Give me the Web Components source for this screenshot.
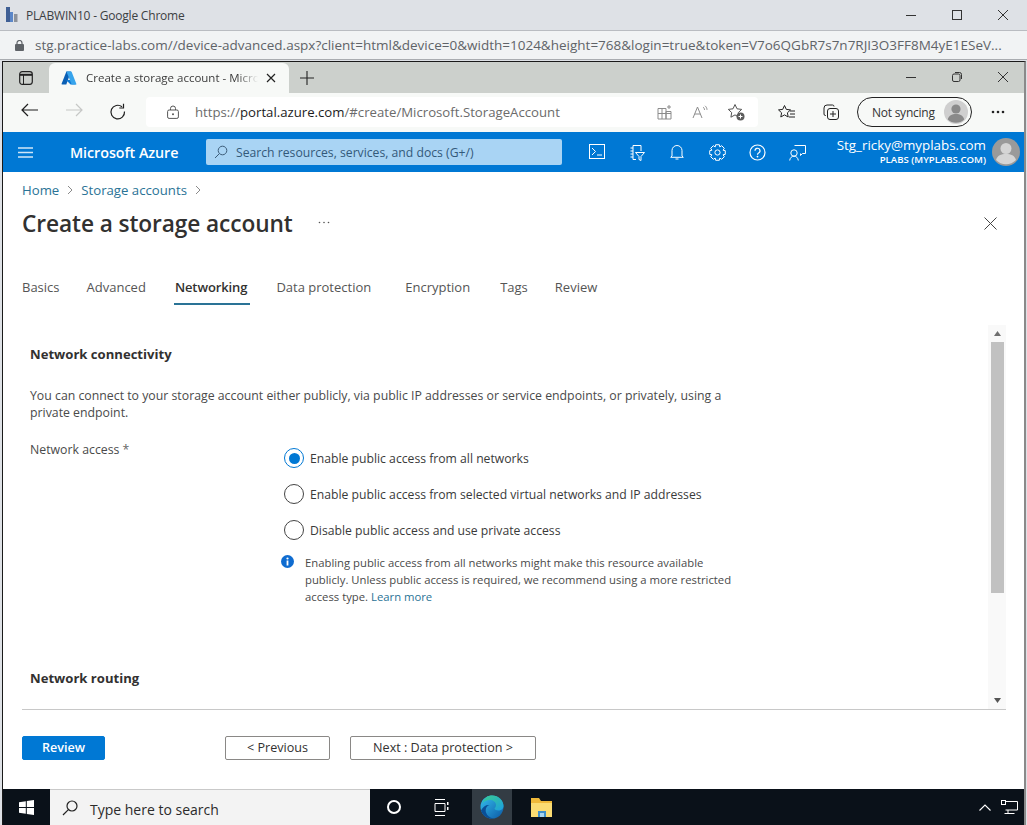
<!DOCTYPE html>
<html lang="en">
<head>
<meta charset="utf-8">
<title>Create a storage account</title>
<style>
html, body { margin: 0; padding: 0; height: 100%; overflow: hidden; background: #fff; }
body { font-family: "Open Sans", "Liberation Sans", sans-serif; }
</style>
</head>
<body>
<host-window>
  <edge-window>
    <azure-header></azure-header>
    <storage-blade></storage-blade>
  </edge-window>
  <win-taskbar></win-taskbar>
</host-window>

<script>
// every element here is just markup + styles, so one small helper is enough
function el(name, html) {
    customElements.define(name, class extends HTMLElement {
        constructor() {
            super();
            this.attachShadow({ mode: 'open' });
            this.shadowRoot.innerHTML = html;
        }
    });
}

const svg = (w, h, body, extra = '') =>
    `<svg width="${w}" height="${h}" viewBox="0 0 ${w} ${h}" fill="none" ${extra}>${body}</svg>`;

// outline of a cog with n teeth
function cogPath(cx, cy, outer, inner, n) {
    const pts = [];
    for (let i = 0; i < n; i++) {
        const a = (i / n) * Math.PI * 2;
        const step = Math.PI * 2 / n;
        [[inner, -.5], [outer, -.3], [outer, .3], [inner, .5]].forEach(([r, k]) => {
            const t = a + k * step;
            pts.push((cx + r * Math.cos(t)).toFixed(2) + ' ' + (cy + r * Math.sin(t)).toFixed(2));
        });
    }
    return 'M' + pts.join('L') + 'Z';
}

const azureLogo = svg(16, 14, `
    <path d="M5.4 .4H10L5.3 13.6H1.1a.6.6 0 0 1-.5-.8Z" fill="#0a5fb4"/>
    <path d="M12 9H5l4.6 4.6h5.2Z" fill="#0f7ad6"/>
    <path d="M5.4 .4h4.5a.7.7 0 0 1 .7.4L15.4 13a.5.5 0 0 1-.5.6h-4.2Z" fill="#37a4ec"/>`);

el('host-window', `
<style>
:host { display: flex; flex-direction: column; width: 1027px; height: 825px; background: #dee1e6; overflow: hidden; }
.title { height: 31px; flex: none; display: flex; align-items: center; border-bottom: 1px solid #b9bcc1; box-sizing: border-box; padding-left: 6px; padding-right: 1px; font-size: 12px; color: #3c4043; }
.title span { margin-left: 8px; flex: 1; letter-spacing: -.2px; padding-top: 1px; }
.title button { all: unset; width: 46px; display: flex; justify-content: center; }
.addr { height: 29px; flex: none; display: flex; align-items: center; background: #f1f3f4; border-bottom: 1px solid #a9acb0; box-sizing: border-box; padding-left: 15px; font-size: 13.5px; color: #5f6368; }
.addr span { margin-left: 11px; white-space: nowrap; }
.body { flex: 1; min-height: 0; display: flex; flex-direction: column; margin: 1px 1px 0 2px; border-top: 1px solid #1a1a1a; border-left: 1px solid #1a1a1a; border-right: 2px solid #8a8a8a; }
::slotted(edge-window) { flex: 1; min-height: 0; }
</style>
<div class="title">
  ${svg(12, 16, `<rect x="0" y="0" width="4" height="15" fill="#3f5f95"/><rect x="4" y="5" width="3" height="10" fill="#5b86c8"/><rect x="8" y="7" width="3.5" height="8" fill="#8d929b"/>`)}
  <span>PLABWIN10 - Google Chrome</span>
  <button>${svg(12, 12, `<path d="M1 6.5h10" stroke="#333"/>`)}</button>
  <button>${svg(12, 12, `<rect x="1.5" y="1.5" width="9" height="9" stroke="#333"/>`)}</button>
  <button>${svg(12, 12, `<path d="M1 1l10 10M11 1 1 11" stroke="#333"/>`)}</button>
</div>
<div class="addr">
  ${svg(9, 11, `<rect x="0" y="4" width="9" height="7" rx="1" fill="#5f6368"/><path d="M2 4V3a2.5 2.5 0 0 1 5 0v1" stroke="#5f6368" stroke-width="1.2"/>`)}
  <span>stg.practice-labs.com//device-advanced.aspx?client=html&amp;device=0&amp;width=1024&amp;height=768&amp;login=true&amp;token=V7o6QGbR7s7n7RJI3O3FF8M4yE1ESeV...</span>
</div>
<div class="body"><slot></slot></div>
`);

el('edge-tabs', `
<style>
:host { display: flex; align-items: flex-end; height: 31px; flex: none; background: #ccd0cc; font-size: 11.5px; color: #3b3b3b; }
.side { width: 46px; height: 31px; display: flex; align-items: center; justify-content: center; }
.tab { width: 240px; height: 30px; background: #f7f9f7; border-radius: 6px 6px 0 0; display: flex; align-items: center; box-sizing: border-box; padding: 0 0 1px 12px; }
.tab .t { margin-left: 9px; width: 172px; white-space: nowrap; overflow: hidden; -webkit-mask-image: linear-gradient(90deg, #000 88%, transparent); mask-image: linear-gradient(90deg, #000 88%, transparent); }
.tab .x { margin-left: 8px; display: flex; }
.plus { margin-left: 11px; height: 31px; display: flex; align-items: center; flex: 1; }
.ctl { height: 30px; padding-bottom: 1px; width: 46px; display: flex; align-items: center; justify-content: center; }
</style>
<div class="side">${svg(14, 14, `<rect x=".7" y=".7" width="12.6" height="12.6" rx="2.5" stroke="#222" stroke-width="1.2"/><path d="M1 3.800h12" stroke="#222" stroke-width="2"/><path d="M4.5 4v9" stroke="#222"/>`)}</div>
<div class="tab">${azureLogo}<span class="t">Create a storage account - Microsoft Azure</span><span class="x">${svg(10, 10, `<path d="M1 1l8 8M9 1 1 9" stroke="#222" stroke-width="1.2"/>`)}</span></div>
<div class="plus">${svg(14, 14, `<path d="M7 0v14M0 7h14" stroke="#222" stroke-width="1.1"/>`)}</div>
<div class="ctl">${svg(12, 12, `<path d="M1 6.5h10" stroke="#333"/>`)}</div>
<div class="ctl">${svg(12, 12, `<rect x="1.5" y="3" width="7.5" height="7.5" rx="1.5" stroke="#333"/><path d="M4 1.5h4.500A2 2 0 0 1 10.5 3.500V8" stroke="#333"/>`)}</div>
<div class="ctl" style="margin-right:-2px">${svg(12, 12, `<path d="M1 1l10 10M11 1 1 11" stroke="#333"/>`)}</div>
`);

el('edge-toolbar', `
<style>
:host { display: flex; align-items: center; height: 39px; flex: none; background: #f7f9f7; box-sizing: border-box; padding-bottom: 1px; }
.nav { display: flex; width: 143px; }
.nav span { width: 44px; display: flex; justify-content: center; }
.nav span:first-child { margin-left: 5px; }
.box { width: 612px; height: 30px; background: #fff; border-radius: 4px; display: flex; align-items: center; box-sizing: border-box; padding-left: 21px; font-size: 13.2px; color: #6b6b6b; }
.box .u { margin-left: 16px; flex: 1; white-space: nowrap; }
.box b { font-weight: 400; color: #1c1c1c; }
.box i { display: flex; width: 36px; justify-content: center; }
.box i:last-child { margin-right: 4px; }
.t2 { display: flex; margin-left: 7px; width: 92px; }
.t2 span { width: 44px; display: flex; justify-content: center; }
.pill { width: 115px; height: 30px; box-sizing: border-box; border: 1px solid #222; border-radius: 15px; display: flex; align-items: center; font-size: 12px; color: #333; padding-left: 14px; }
.pill span { flex: 1; letter-spacing: -.25px; }
.pill svg { margin-right: 3px; }
.more { margin-left: 19px; display: flex; }
</style>
<div class="nav">
  <span>${svg(18, 14, `<path d="M17 7H1M7 1 1 7l6 6" stroke="#1f1f1f" stroke-width="1.2"/>`)}</span>
  <span>${svg(18, 14, `<path d="M1 7h16M11 1l6 6-6 6" stroke="#c6c8c6" stroke-width="1.2"/>`)}</span>
  <span>${svg(18, 18, `<path d="M15.5 8.500A6.800 6.800 0 1 1 13 3.800" stroke="#1f1f1f" stroke-width="1.2"/><path d="M14.5 .8v4.200h-4.200" stroke="#1f1f1f" stroke-width="1.2"/>`)}</span>
</div>
<div class="box">
  ${svg(12, 14, `<rect x=".6" y="5" width="10.8" height="8.4" rx="1.5" stroke="#555"/><path d="M3.5 5V3.500a2.5 2.5 0 0 1 5 0V5" stroke="#555"/><circle cx="6" cy="9.200" r="1" fill="#555"/>`)}
  <span class="u">https://<b>portal.azure.com</b>/#create/Microsoft.StorageAccount</span>
  <i>${svg(15, 15, `<path d="M1 3.500h8V14H1ZM9 6.500h5V14H9ZM1 8.500h13M5 3.500V14M12 0v4M10 2h4" stroke="#8c8c8c"/>`)}</i>
  <i>${svg(16, 14, `<path d="M1 13 5.5 2 10 13M2.800 9h5.400" stroke="#8c8c8c"/><path d="M11 2c1 .8 1.5 1.800 1.5 3M13 .8c1.300 1.100 2 2.5 2 4" stroke="#8c8c8c"/>`)}</i>
  <i>${svg(18, 18, `<path d="M8 1.500l2 4.300 4.700.6-3.400 3.200.8 4.600L8 11.900l-4.100 2.300.8-4.600L1.300 6.400 6 5.800Z" stroke="#555" stroke-linejoin="round"/><circle cx="13.5" cy="13.5" r="4" fill="#5d5d5d"/><path d="M11.5 13.5h4M13.5 11.5v4" stroke="#fff"/>`)}</i>
</div>
<div class="t2">
  <span>${svg(18, 16, `<path d="M6.5 1.500 8.300 5.400l4.200.5-3.100 2.900.8 4.200-3.700-2.100-3.700 2.100.8-4.200L.5 5.900l4.200-.5Z" stroke="#222" stroke-linejoin="round"/><path d="M12 7h5M12 10h5M11 13h6" stroke="#222"/>`)}</span>
  <span>${svg(16, 16, `<path d="M3 11.500H2.500a1.5 1.5 0 0 1-1.500-1.500V4a3 3 0 0 1 3-3h5.500A1.5 1.5 0 0 1 11 2.500" stroke="#222"/><rect x="4.5" y="4.5" width="11" height="11" rx="2.5" stroke="#222"/><path d="M10 7v6M7 10h6" stroke="#222"/>`)}</span>
</div>
<div class="pill"><span>Not syncing</span>${svg(24, 24, `<circle cx="12" cy="12" r="12" fill="#cfcfcf"/><circle cx="12" cy="9" r="4.6" fill="#8a8a8a"/><path d="M3.800 19.5c1-4 4-5.500 8.200-5.500s7.200 1.500 8.200 5.500a12 12 0 0 1-16.400 0Z" fill="#8a8a8a"/>`)}</div>
<div class="more">${svg(14, 4, `<circle cx="2" cy="2" r="1.3" fill="#222"/><circle cx="7" cy="2" r="1.3" fill="#222"/><circle cx="12" cy="2" r="1.3" fill="#222"/>`)}</div>
`);

el('edge-window', `
<style>
:host { display: flex; flex-direction: column; background: #fff; overflow: hidden; }
.page { flex: 1; min-height: 0; display: flex; flex-direction: column; }
</style>
<edge-tabs></edge-tabs>
<edge-toolbar></edge-toolbar>
<div class="page"><slot></slot></div>
`);

el('azure-header', `
<style>
:host { display: flex; align-items: center; height: 40px; flex: none; background: #0078d4; color: #fff; }
.burger { margin-left: 15px; display: flex; }
.brand { margin-left: 37px; width: 136px; font-size: 14.3px; font-weight: 600; letter-spacing: -.05px; white-space: nowrap; }
.search { width: 356px; height: 26px; background: #a9d4f4; border-radius: 2px; display: flex; align-items: center; box-sizing: border-box; padding-left: 8px; font-size: 12.2px; color: #33597a; }
.search span { margin-left: 8px; white-space: nowrap; }
.icons { display: flex; margin-left: 15px; }
.icons i { width: 40px; display: flex; justify-content: center; }
.user { flex: 1; display: flex; flex-direction: column; align-items: flex-end; line-height: 1; white-space: nowrap; }
.user .a { font-size: 13.4px; margin-bottom: 3px; }
.user .b { font-size: 9.6px; font-weight: 600; }
.avatar { margin: 0 4px 0 6px; display: flex; }
</style>
<div class="burger">${svg(15, 11, `<path d="M0 1h15M0 5.500h15M0 10h15" stroke="#cfe6f8" stroke-width="1.3"/>`)}</div>
<div class="brand">Microsoft Azure</div>
<div class="search">${svg(14, 14, `<circle cx="8.5" cy="5.5" r="4.3" stroke="#3c5c78"/><path d="M5.4 8.600 1 13" stroke="#3c5c78"/>`)}<span>Search resources, services, and docs (G+/)</span></div>
<div class="icons">
  <i>${svg(16, 15, `<rect x=".5" y=".5" width="15" height="14" stroke="#fff"/><path d="M3 4l3.500 3.500L3 11M8 11h5" stroke="#fff"/>`)}</i>
  <i>${svg(16, 17, `<path d="M4 1.500h8V7M4 1.500v14h3M1.500 4h2.500M1.500 7h2.500M1.500 10h2.500M1.500 13h2.500" stroke="#fff"/><path d="M6.500 8.500h9l-3.500 4v4l-2-1v-3Z" stroke="#fff"/>`)}</i>
  <i>${svg(14, 16, `<path d="M2 12V6.500a5 5 0 0 1 10 0V12l1.300 1.300H.7Z" stroke="#fff"/><path d="M5.500 15h3" stroke="#fff"/>`)}</i>
  <i>${svg(17, 17, `<circle cx="8.5" cy="8.5" r="2.6" stroke="#fff"/><path d="${cogPath(8.5, 8.5, 8, 6, 8)}" stroke="#fff" stroke-linejoin="round"/>`)}</i>
  <i>${svg(17, 17, `<circle cx="8.5" cy="8.5" r="7.5" stroke="#fff" stroke-width="1.2"/><path d="M6 6.800a2.500 2.500 0 1 1 3.600 2.200c-.8.400-1.100.8-1.100 1.700" stroke="#fff" stroke-width="1.2"/><circle cx="8.5" cy="12.6" r=".9" fill="#fff"/>`)}</i>
  <i>${svg(17, 17, `<path d="M5.500 1.500h11v8h-3l-2 2v-2" stroke="#fff"/><circle cx="5" cy="9" r="3.2" stroke="#fff" fill="#0078d4"/><path d="M.7 16.500c.3-2.700 2-4.300 4.300-4.300s4 1.600 4.300 4.300" stroke="#fff"/>`)}</i>
</div>
<div class="user"><span class="a">Stg_ricky@myplabs.com</span><span class="b">PLABS (MYPLABS.COM)</span></div>
<div class="avatar">${svg(28, 28, `<circle cx="14" cy="14" r="14" fill="#9a9a9a"/><circle cx="14" cy="10.5" r="5.5" fill="#d5d5d5"/><path d="M4 22c1.300-4.500 5-6 10-6s8.700 1.500 10 6a14 14 0 0 1-20 0Z" fill="#d5d5d5"/>`)}</div>
`);

el('radio-option', `
<style>
:host { display: flex; align-items: center; height: 36px; font-size: 12.2px; color: #3a3a3a; white-space: nowrap; }
.dot { width: 20px; height: 20px; box-sizing: border-box; border: 1px solid #444; border-radius: 50%; margin-right: 6px; margin-left: -1px; background: #fff; display: flex; align-items: center; justify-content: center; }
:host([checked]) .dot { border-color: #0078d4; }
:host([checked]) .dot::after { content: ""; width: 11px; height: 11px; border-radius: 50%; background: #0078d4; }
</style>
<span class="dot"></span><slot></slot>
`);

el('info-note', `
<style>
:host { display: flex; font-size: 11.3px; line-height: 17px; color: #4a4a4a; }
.i { flex: none; width: 24px; margin-left: -4px; padding-top: 1px; }
</style>
<div class="i">${svg(13, 13, `<circle cx="6.5" cy="6.5" r="6.5" fill="#0f6cd0"/><rect x="5.6" y="5.5" width="1.8" height="5" fill="#fff"/><circle cx="6.5" cy="3.5" r="1.1" fill="#fff"/>`)}</div>
<div><slot></slot></div>
`);

el('form-scroll', `
<style>
:host { display: flex; height: 385px; flex: none; border-bottom: 1px solid #c8c8c8; box-sizing: border-box; margin-left: 19px; margin-right: 18px; }
.view { flex: 1; overflow: hidden; padding-left: 8px; }
.bar { width: 18px; background: #f9f9f9; display: flex; flex-direction: column; align-items: center; }
.up, .dn { height: 17px; flex: none; display: flex; align-items: center; justify-content: center; }
.thumb { flex: none; height: 251px; width: 13px; background: #c1c1c1; }
.gap { flex: 1; }
</style>
<div class="view"><slot></slot></div>
<div class="bar">
  <div class="up">${svg(7, 5, `<path d="M3.5 0 7 5H0Z" fill="#6f6f6f"/>`)}</div>
  <div class="thumb"></div>
  <div class="gap"></div>
  <div class="dn">${svg(7, 5, `<path d="M3.5 5 7 0H0Z" fill="#555"/>`)}</div>
</div>
`);

el('storage-blade', `
<style>
:host { display: flex; flex-direction: column; flex: 1; min-height: 0; color: #323130; font-size: 12.3px; }
.crumb { display: flex; align-items: center; margin: 9px 0 0 19px; height: 17px; font-size: 13.2px; color: #2a7396; white-space: nowrap; }
.crumb svg { margin: 0 8px; }
.head { display: flex; align-items: center; margin: 8px 0 0 19px; height: 34px; }
h1 { margin: 0; font-size: 22.7px; font-weight: 600; letter-spacing: -.1px; white-space: nowrap; }
.dots { margin-left: 25px; display: flex; margin-bottom: 2px; }
.close { margin-left: auto; margin-right: 27px; display: flex; }
nav { display: flex; margin: 35px 0 0 19px; height: 38px; font-size: 13px; color: #555; }
nav span { height: 33px; display: block; line-height: 24px; white-space: nowrap; }
nav span:nth-child(1) { margin-right: 27px; }
nav span:nth-child(2) { margin-right: 29px; }
nav span:nth-child(3) { margin-right: 29px; }
nav span:nth-child(4) { margin-right: 34px; }
nav span:nth-child(5) { margin-right: 30px; }
nav span:nth-child(6) { margin-right: 27px; }
nav .on { color: #323130; font-weight: 600; position: relative; letter-spacing: -.1px; }
nav .on::after { content: ""; position: absolute; left: -1px; right: -3px; bottom: 3px; height: 2px; background: #2a7396; }
form-scroll { margin-top: 12px; }
h2 { margin: 0; font-size: 13.1px; font-weight: 700; line-height: 18px; }
.s1 { padding-top: 20px; }
p { margin: 24px 0 0; width: 700px; line-height: 17px; color: #4a4a4a; }
.row { display: flex; margin-top: 20px; color: #4a4a4a; }
.row .lab { width: 255px; line-height: 17px; }
.row .lab b { font-weight: 400; color: #666; }
.opts { margin-top: -1px; }
info-note { margin-top: 6px; width: 452px; }
info-note a { color: #2a7396; text-decoration: none; }
h2.s2 { margin-top: 64px; }
.foot { display: flex; align-items: center; flex: 1; min-height: 0; padding: 0 0 4px 19px; }
.btn { box-sizing: border-box; height: 24px; display: flex; align-items: center; justify-content: center; font-size: 12.6px; border: 1px solid #8a8886; border-radius: 2px; color: #323130; white-space: nowrap; }
.primary { width: 83px; background: #0078d4; border-color: #0078d4; color: #fff; font-weight: 600; margin-right: 120px; }
.prev { width: 105px; margin-right: 20px; }
.next { width: 186px; }
</style>
<div class="crumb">Home${svg(6, 10, `<path d="M1 1l4 4-4 4" stroke="#8a8a8a"/>`)}Storage accounts${svg(6, 10, `<path d="M1 1l4 4-4 4" stroke="#8a8a8a"/>`)}</div>
<div class="head">
  <h1>Create a storage account</h1>
  <div class="dots">${svg(12, 3, `<circle cx="1.5" cy="1.5" r=".8" fill="#555"/><circle cx="6" cy="1.5" r=".8" fill="#555"/><circle cx="10.5" cy="1.5" r=".8" fill="#555"/>`)}</div>
  <div class="close">${svg(13, 13, `<path d="M.5.500l12 12M12.500.5l-12 12" stroke="#444"/>`)}</div>
</div>
<nav><span>Basics</span><span>Advanced</span><span class="on">Networking</span><span>Data protection</span><span>Encryption</span><span>Tags</span><span>Review</span></nav>
<form-scroll>
  <div class="s1">
    <h2>Network connectivity</h2>
    <p>You can connect to your storage account either publicly, via public IP addresses or service endpoints, or privately, using a private endpoint.</p>
    <div class="row">
      <div class="lab">Network access <b>*</b></div>
      <div class="opts">
        <radio-option checked>Enable public access from all networks</radio-option>
        <radio-option>Enable public access from selected virtual networks and IP addresses</radio-option>
        <radio-option>Disable public access and use private access</radio-option>
        <info-note>Enabling public access from all networks might make this resource available publicly. Unless public access is required, we recommend using a more restricted access type. <a>Learn more</a></info-note>
      </div>
    </div>
    <h2 class="s2">Network routing</h2>
  </div>
</form-scroll>
<div class="foot">
  <div class="btn primary">Review</div>
  <div class="btn prev">&lt; Previous</div>
  <div class="btn next">Next : Data protection &gt;</div>
</div>
`);

el('win-taskbar', `
<style>
:host { display: flex; align-items: center; height: 36px; flex: none; background: #0a1119; color: #fff; }
.start { width: 47px; display: flex; justify-content: center; }
.search { width: 320px; height: 36px; background: #f3f3f3; border-top: 1px solid #c9c9c9; box-sizing: border-box; display: flex; align-items: center; padding-left: 12px; color: #2b2b2b; font-size: 14px; }
.search span { margin-left: 12px; white-space: nowrap; padding-top: 3px; }
.task { display: flex; align-items: center; justify-content: center; width: 47px; height: 36px; }
.edge { width: 40px; background: #333c44; margin-left: 8px; }
.tray { margin-left: auto; display: flex; align-items: center; gap: 10px; margin-right: 6px; }
</style>
<div class="start">${svg(15, 15, `<path d="M0 2.200 6.800 1.200V7H0ZM7.800 1 15 0V7H7.800ZM0 8h6.800v5.800L0 12.800ZM7.800 8H15v7l-7.200-1Z" fill="#fff"/>`)}</div>
<div class="search">${svg(16, 16, `<circle cx="10" cy="6" r="5" stroke="#222" stroke-width="1.2"/><path d="M6.400 9.600 1 15" stroke="#222" stroke-width="1.2"/>`)}<span>Type here to search</span></div>
<div class="task">${svg(14, 14, `<circle cx="7" cy="7" r="6" stroke="#fff" stroke-width="2"/>`)}</div>
<div class="task">${svg(16, 17, `<path d="M2 .5h10M2 16.500h10M2 4.500h10v8H2Z" stroke="#fff"/><rect x="14" y="3" width="1.5" height="3" fill="#fff"/><rect x="14" y="8" width="1.5" height="3" fill="#fff"/>`)}</div>
<div class="task edge">${svg(24, 24, `
  <defs>
    <linearGradient id="eg" x1="0" y1="0" x2="1" y2="1"><stop offset="0" stop-color="#35c1f1"/><stop offset="1" stop-color="#0c59a4"/></linearGradient>
    <linearGradient id="eh" x1="0" y1="0" x2="1" y2="1"><stop offset="0" stop-color="#3bd08c"/><stop offset="1" stop-color="#1b9de2"/></linearGradient>
  </defs>
  <circle cx="12" cy="12" r="11.5" fill="url(#eg)"/>
  <path d="M2 9C4 3 8 .5 12 .5c6.500 0 11.500 5 11.500 10.500 0 3-2.500 4.500-5 4.500-2 0-4-1-4-2 0-.8 1.500-1 1.500-3.500C16 7 13 5 10 5 6.500 5 3.500 6.500 2 9Z" fill="url(#eh)"/>
  <path d="M9.500 10c-3 1-4.500 4-3.500 7.500 1 3 4 5.500 7.500 6-5 .8-10.500-2-12.500-8C3 11.500 6 9.500 9.500 10Z" fill="#0a4f97"/>`)}</div>
<div class="task" style="width:58px">${svg(23, 21, `<path d="M1 1h8l2 3h11v16H1Z" fill="#f0b93a"/><path d="M1 6h21v14H1Z" fill="#fbdc73"/><rect x="8" y="14" width="8" height="6" fill="#3f8fc9"/><rect x="10" y="16" width="4" height="4" fill="#a8d4ef"/>`)}</div>
<div class="tray">
  ${svg(12, 7, `<path d="M.5 6.500 6 1l5.500 5.500" stroke="#fff" stroke-width="1.1"/>`)}
  ${svg(17, 14, `<path d="M4.500 1.500H16.500V10H4.500M7 10v3.500M3.500 13.500h10" stroke="#fff"/><rect x=".5" y=".5" width="4" height="4" stroke="#fff" fill="#0a1119"/>`)}
</div>
`);
</script>
</body>
</html>
